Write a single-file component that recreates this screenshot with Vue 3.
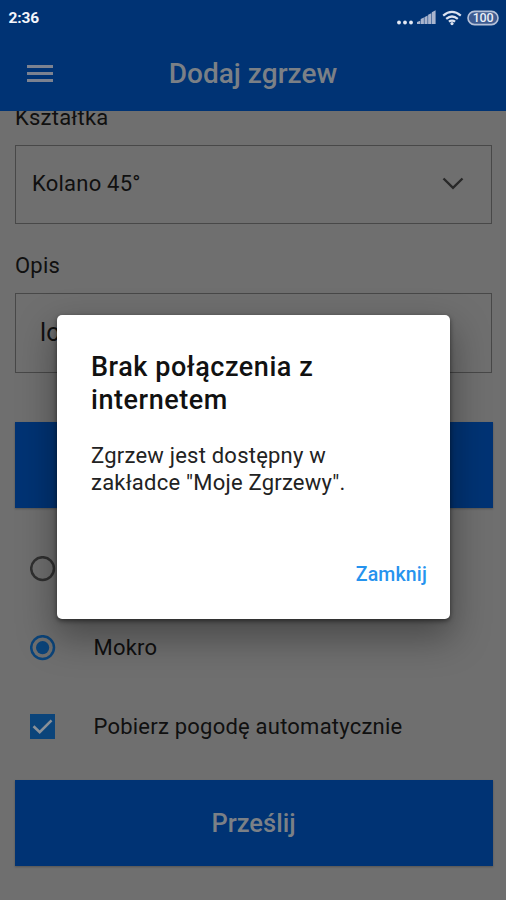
<script setup>
import { ref } from 'vue'

const dialogOpen = ref(true)
const description = ref('lorem')
const weather = ref('wet')
const automatic = ref(true)
const options = [
  { id: 'dry', label: 'Sucho' },
  { id: 'wet', label: 'Mokro' },
]
</script>

<template>
  <div class="screen">
    <header class="header">
      <div class="status">
        <span class="time">2:36</span>
        <svg class="indicators" width="104" height="18" viewBox="0 0 104 18">
          <g fill="#e3e9f4">
            <circle cx="2" cy="13.5" r="1.9" />
            <circle cx="8" cy="13.5" r="1.9" />
            <circle cx="14" cy="13.5" r="1.9" />
          </g>
          <path d="M20 15v-2l3.2-1.2V15zM23.7 15v-5l3.2-1.4V15zM27.4 15V8.2l3.2-1.6V15zM31.1 15V5.8l3.2-1.6V15zM34.8 15V3.2L38.6 1.2V15z" fill="#a9b5ce" />
          <g fill="none" stroke="#dce3f0" stroke-width="2.2">
            <path d="M46.2 6.7Q55 -.8 63.8 6.7" />
            <path d="M49.2 9.9Q55 5.1 60.8 9.9" />
            <path d="M51.9 12.7Q55 10.4 58.1 12.7" />
          </g>
          <circle cx="55" cy="14.6" r="1.6" fill="#dce3f0" />
          <rect x="71" y="2.4" width="30" height="13.2" rx="6.6" fill="#3d5b91" stroke="#b5c1d8" stroke-width="1.6" />
          <text x="86" y="13.4" text-anchor="middle" class="battery">100</text>
        </svg>
      </div>
      <div class="toolbar">
        <svg class="menu" width="26" height="18" viewBox="0 0 26 18">
          <path d="M0 1.6h26M0 8.6h26M0 15.6h26" stroke="#7c8290" stroke-width="3" />
        </svg>
        <h1 class="title">Dodaj zgrzew</h1>
      </div>
    </header>

    <main class="form">
      <label class="label">Kształtka</label>
      <div class="field select">
        <span>Kolano 45°</span>
        <svg width="22" height="14" viewBox="0 0 22 14">
          <path d="M1.5 1.5 11 10.8 20.5 1.5" fill="none" stroke="#282828" stroke-width="2.4" />
        </svg>
      </div>
      <label class="label second">Opis</label>
      <div class="field input">{{ description }}</div>
      <button class="button location"></button>

      <div v-for="option in options" :key="option.id" class="choice">
        <svg width="26" height="26" viewBox="0 0 26 26">
          <circle cx="12.6" cy="12.6" r="11.4" fill="none" :stroke="weather === option.id ? '#0b447a' : '#303030'" stroke-width="2.5" />
          <circle v-if="weather === option.id" cx="12.6" cy="12.6" r="6.6" fill="#0b447a" />
        </svg>
        <span>{{ option.label }}</span>
      </div>
      <div class="choice">
        <svg width="26" height="26" viewBox="0 0 26 26">
          <rect width="25" height="25" fill="#0b447a" />
          <path v-if="automatic" d="M3.5 12.3 9.7 18.2 21.5 6.4" fill="none" stroke="#8a9097" stroke-width="2.6" />
        </svg>
        <span>Pobierz pogodę automatycznie</span>
      </div>
      <button class="button submit">Prześlij</button>
    </main>

    <div v-if="dialogOpen" class="overlay">
      <section class="dialog" role="dialog">
        <h2 class="heading">Brak połączenia z internetem</h2>
        <p class="message">Zgrzew jest dostępny w zakładce "Moje Zgrzewy".</p>
        <button class="close" @click="dialogOpen = false">Zamknij</button>
      </section>
    </div>
  </div>
</template>

<style>
body {
  margin: 0;
  background: #6f6f6f;
}
</style>

<style scoped>
.screen {
  position: relative;
  width: 506px;
  height: 900px;
  overflow: hidden;
  background: #6f6f6f;
  color: #101010;
  font-family: Roboto, "Liberation Sans", sans-serif;
  font-size: 22px;
  letter-spacing: 0.22px;
}
.header {
  height: 111px;
  background: #003374;
}
.status {
  display: flex;
  align-items: center;
  justify-content: space-between;
  height: 36px;
  padding: 0 5px 0 8.5px;
}
.time {
  color: #f4f6fb;
  font-size: 15.5px;
  font-weight: 700;
  letter-spacing: -0.1px;
}
.battery {
  fill: #e9eef7;
  font-size: 12.5px;
  font-weight: 500;
  letter-spacing: -0.3px;
}
.toolbar {
  display: grid;
  grid-template-columns: 26px 1fr 26px;
  align-items: center;
  height: 75px;
  padding: 0 27px;
}
.title {
  margin: 0;
  text-align: center;
  color: #7b8086;
  font-size: 28px;
  font-weight: 500;
  letter-spacing: 0.03px;
}
.form {
  height: 789px;
  padding: 0 14px 0 15px;
  overflow: hidden;
}
.label {
  display: block;
  height: 26px;
  margin-top: -6px;
  margin-bottom: 14px;
  line-height: 26px;
}
.label.second {
  margin-top: 29px;
}
.field {
  box-sizing: border-box;
  display: flex;
  align-items: center;
  height: 79px;
  border: 1.5px solid #484848;
}
.select {
  justify-content: space-between;
  padding: 0 27px 2px 16px;
}
.input {
  height: 80px;
  padding-left: 24px;
  padding-bottom: 2px;
  font-size: 25px;
}
.button {
  display: block;
  width: 478px;
  height: 86px;
  padding: 0 1px 0 0;
  border: 0;
  background: #003374;
  color: #7b8086;
  font: 500 25.5px Roboto, "Liberation Sans", sans-serif;
  box-shadow: 0 1px 2px rgba(0, 0, 0, 0.25);
}
.location {
  margin: 49px 0 21px;
}
.choice {
  display: flex;
  align-items: center;
  gap: 38px;
  height: 79px;
  padding-left: 14.5px;
}
.submit {
  margin-top: 14px;
}
.overlay {
  position: absolute;
  inset: 0;
  display: flex;
  align-items: flex-start;
  justify-content: center;
  padding-top: 315.4px;
  padding-left: 1px;
}
.dialog {
  box-sizing: border-box;
  display: flex;
  flex-direction: column;
  width: 393px;
  height: 303.6px;
  padding: 36px 23px 27px 34px;
  border-radius: 5px;
  background: #fff;
  box-shadow: 0 16px 36px 3px rgba(0, 0, 0, 0.34), 0 2px 5px rgba(0, 0, 0, 0.5);
}
.heading {
  width: 260px;
  margin: 0;
  color: #111;
  font-size: 27px;
  font-weight: 500;
  line-height: 32.4px;
  letter-spacing: 0.55px;
}
.message {
  width: 270px;
  margin: 26px 0 0;
  color: #222;
  line-height: 27px;
}
.close {
  align-self: flex-end;
  margin-top: auto;
  padding: 0;
  border: 0;
  background: none;
  color: #2693ee;
  font: 500 19.5px/34px Roboto, "Liberation Sans", sans-serif;
  letter-spacing: 0.15px;
}
</style>
